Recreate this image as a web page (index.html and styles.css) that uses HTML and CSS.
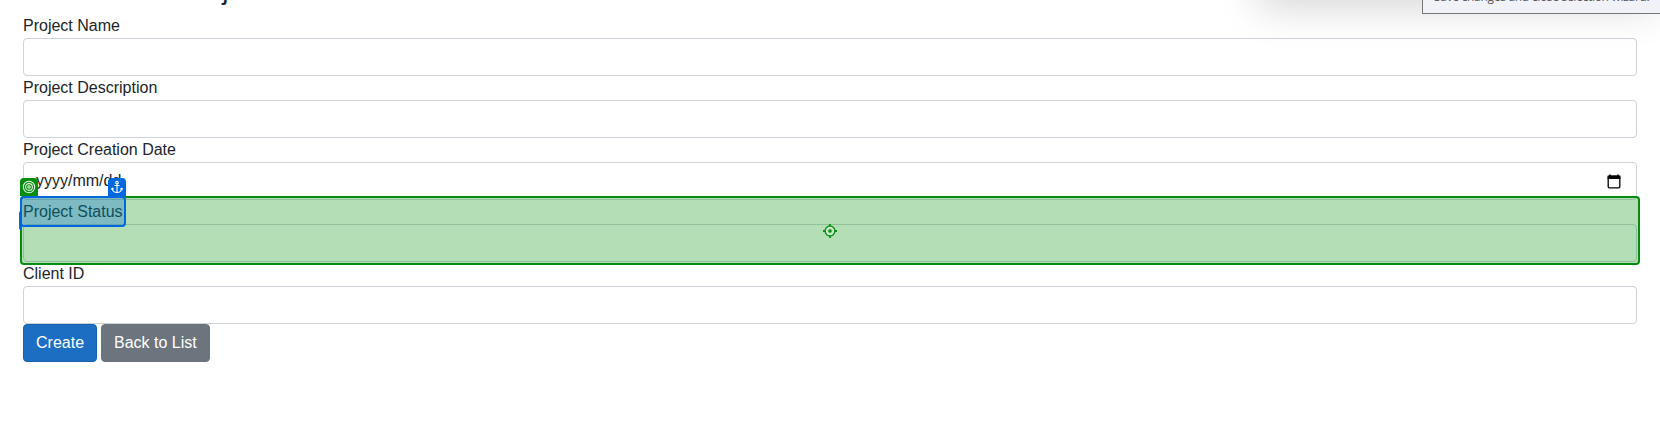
FILE: index.html
```html
<!DOCTYPE html>
<html lang="en">
<head>
<meta charset="utf-8">
<title>Create New Project</title>
<link rel="stylesheet" href="styles.css">
</head>
<body>
<main class="page">
  <h3 class="title">Create New Project</h3>
  <form class="form">
    <label class="label">Project Name</label>
    <div class="control"></div>
    <label class="label">Project Description</label>
    <div class="control"></div>
    <label class="label">Project Creation Date</label>
    <div class="control date">
      <span>yyyy/mm/dd</span>
      <svg class="calendar" width="14" height="15" viewBox="0 0 14 15"><path d="M3 .5V3M11 .5V3" stroke="#000" stroke-width="1.500"/><rect x="1.200" y="2.200" width="11.600" height="11.600" rx="1" fill="none" stroke="#000" stroke-width="1.300"/><path d="M.6 1.600h12.800v3.400H.6z" fill="#000"/></svg>
    </div>
    <div class="group">
      <label class="label">Project Status</label>
      <div class="control"></div>
      <div class="target">
        <svg width="14" height="14" viewBox="0 0 14 14" fill="none" stroke="#0a9214"><circle cx="7" cy="7" r="4.300" stroke="#d9efda" stroke-width="3"/><circle cx="7" cy="7" r="4.900" stroke-width="1.500"/><circle cx="7" cy="7" r="1.800" fill="#0a9214" stroke="none"/><path d="M7 0v2.500M7 11.500v2.500M0 7h2.500M11.500 7h2.500" stroke-width="1.800"/></svg>
      </div>
      <div class="anchor-tail"></div>
      <div class="anchor"></div>
      <div class="badge badge-target">
        <svg width="14" height="14" viewBox="0 0 14 14" fill="none" stroke="#e4f5e4" stroke-width="1.100"><circle cx="7" cy="7" r="5.700"/><circle cx="7" cy="7" r="3.400"/><circle cx="7" cy="7" r="1.200"/></svg>
      </div>
      <div class="badge badge-anchor">
        <svg width="14" height="14" viewBox="0 0 14 14" fill="none" stroke="#fff" stroke-width="1.100"><circle cx="7" cy="2.500" r="1.300"/><path d="M7 4v8.500M4.500 5.500h5M2.200 8.500c.3 2.600 2 4 4.800 4s4.500-1.400 4.800-4M1.200 9.500l1-1.300 1.500 1M12.800 9.500l-1-1.300-1.500 1"/></svg>
      </div>
    </div>
    <label class="label">Client ID</label>
    <div class="control"></div>
    <div class="actions">
      <button type="button" class="btn primary">Create</button>
      <button type="button" class="btn secondary">Back to List</button>
    </div>
  </form>
</main>
<div class="panel"></div>
<div class="tooltip">Save changes and close selection wizard.</div>
</body>
</html>
```
FILE: styles.css
```css
* {
  box-sizing: border-box;
}

body {
  margin: 0;
  height: 442px;
  overflow: hidden;
  position: relative;
  background: #fff;
  color: #212529;
  font: 16px/24px "Liberation Sans", Arial, sans-serif;
}

.page {
  padding: 0 23px;
  margin-top: -27px;
}

.title {
  margin: 0 0 7px;
  font-size: 28px;
  font-weight: 500;
  line-height: 34px;
}

.form {
  display: flex;
  flex-direction: column;
}

.label {
  display: block;
  height: 24px;
  padding-top: 0.400px;
}

.control {
  height: 38px;
  border: 1px solid #ced4da;
  border-radius: 4px;
}

.date {
  display: flex;
  align-items: center;
  justify-content: space-between;
  padding: 0 15px 0 12px;
}

.group {
  position: relative;
}

/* Selection overlays drawn on top of the form group */
.target {
  position: absolute;
  inset: -4px -3px -3px -3px;
  display: flex;
  align-items: center;
  justify-content: center;
  border: 2px solid #068c0e;
  border-radius: 4px;
  background: rgba(6, 146, 14, 0.3);
}

.anchor {
  position: absolute;
  left: -3px;
  top: -4px;
  width: 106px;
  height: 31px;
  border: 2px solid #0068de;
  border-radius: 4px;
  background: rgba(0, 104, 222, 0.3);
}

.anchor-tail {
  position: absolute;
  left: -4px;
  top: 11px;
  width: 2px;
  height: 19px;
  border-radius: 2px 0 0 2px;
  background: #0068de;
}

.badge {
  position: absolute;
  top: -22px;
  width: 18px;
  height: 18px;
  display: flex;
  align-items: center;
  justify-content: center;
  border-radius: 4px 4px 0 0;
}

.badge-target {
  left: -3px;
  background: #068c0e;
}

.badge-anchor {
  left: 85px;
  background: #0068de;
}

.actions {
  display: flex;
  gap: 4px;
}

.btn {
  height: 38px;
  padding: 0 12px;
  border: 1px solid;
  border-radius: 4px;
  color: #fff;
  font: inherit;
}

.primary {
  background: #1b6ec2;
  border-color: #1861ac;
}

.secondary {
  background: #6c757d;
  border-color: #6c757d;
}

/* Floating panel above the viewport; only its shadow reaches in */
.panel {
  position: absolute;
  left: 1258px;
  top: -100px;
  width: 400px;
  height: 100px;
  box-shadow: 0 7px 42px rgba(0, 0, 0, 0.17);
}

.tooltip {
  position: absolute;
  left: 1422px;
  top: -12px;
  width: 260px;
  height: 26px;
  padding: 0 11px;
  border: 1px solid #767676;
  background: #f1f1f8;
  color: #575757;
  font: 12px/16px "Open Sans", "Noto Sans", sans-serif;
  letter-spacing: -0.300px;
  white-space: nowrap;
}
```
